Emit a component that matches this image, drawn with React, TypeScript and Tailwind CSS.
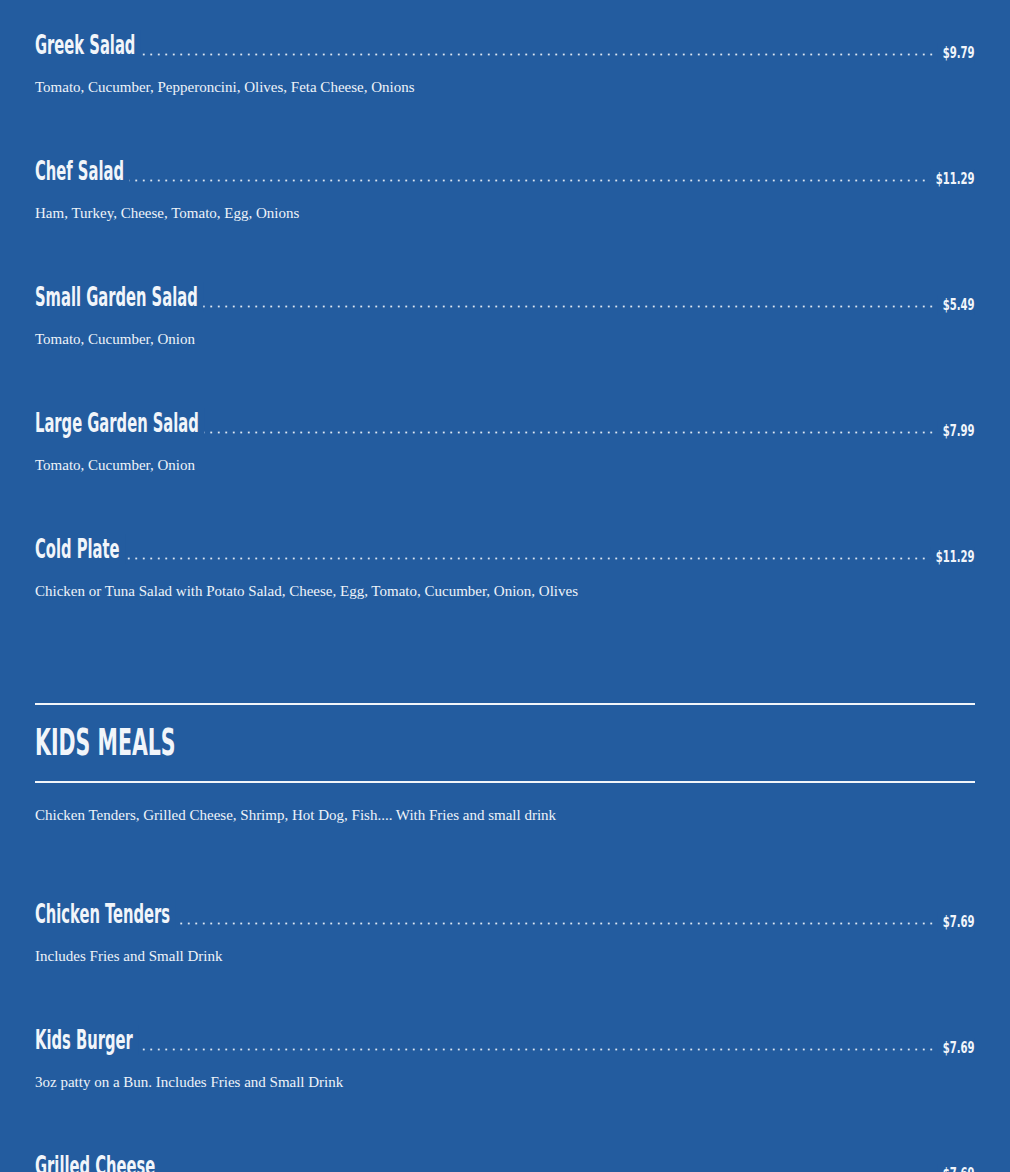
import React from "react";

type Item = { name: string; price: string; desc: string };

const salads: Item[] = [
  { name: "Greek Salad", price: "$9.79", desc: "Tomato, Cucumber, Pepperoncini, Olives, Feta Cheese, Onions" },
  { name: "Chef Salad", price: "$11.29", desc: "Ham, Turkey, Cheese, Tomato, Egg, Onions" },
  { name: "Small Garden Salad", price: "$5.49", desc: "Tomato, Cucumber, Onion" },
  { name: "Large Garden Salad", price: "$7.99", desc: "Tomato, Cucumber, Onion" },
  { name: "Cold Plate", price: "$11.29", desc: "Chicken or Tuna Salad with Potato Salad, Cheese, Egg, Tomato, Cucumber, Onion, Olives" },
];

const kids: Item[] = [
  { name: "Chicken Tenders", price: "$7.69", desc: "Includes Fries and Small Drink" },
  { name: "Kids Burger", price: "$7.69", desc: "3oz patty on a Bun. Includes Fries and Small Drink" },
  { name: "Grilled Cheese", price: "$7.69", desc: "Includes Fries and Small Drink" },
];

const cond = "font-['DejaVu_Sans_Condensed','DejaVu_Sans',sans-serif]";
const serif = "font-['Liberation_Serif','Times_New_Roman',serif]";

function MenuItem({ item, last }: { item: Item; last?: boolean }) {
  return (
    <div className={last ? "" : "mb-[57px]"}>
      <div className="flex h-[30px] items-end justify-between bg-[radial-gradient(circle,rgba(241,245,250,0.9)_0.8px,transparent_1.3px)] bg-[length:7.5px_3px] bg-[position:0_23px] bg-repeat-x">
        <span
          className={`${cond} inline-block origin-left scale-x-[0.63] bg-[#235c9f] pr-[9px] text-[26px] font-bold leading-[30px] text-[#f1f5fa] whitespace-nowrap`}
        >
          {item.name}
        </span>
        <span
          className={`${cond} mb-[-3px] inline-block origin-right scale-x-[0.7] bg-[#235c9f] pl-[8px] text-[16px] font-bold leading-[20px] text-[#f1f5fa] whitespace-nowrap`}
        >
          {item.price}
        </span>
      </div>
      <p className={`${serif} mt-[15px] text-[15px] leading-[24px] text-[#eef3f9]`}>{item.desc}</p>
    </div>
  );
}

export default function App() {
  return (
    <div className="min-h-[1172px] w-full overflow-hidden bg-[#235c9f] px-[35px] pt-[30px]">
      {salads.map((s, i) => (
        <MenuItem key={s.name} item={s} last={i === salads.length - 1} />
      ))}
      <div className="mt-[100px] border-t-2 border-[#f1f5fa]" />
      <div className="flex h-[76px] items-center pb-[3px]">
        <h2
          className={`${cond} inline-block origin-left scale-x-[0.6] text-[38px] font-bold leading-[44px] text-[#f1f5fa] whitespace-nowrap`}
        >
          KIDS MEALS
        </h2>
      </div>
      <div className="border-t-2 border-[#f1f5fa]" />
      <p className={`${serif} mt-[20px] text-[15px] leading-[24px] text-[#eef3f9]`}>
        Chicken Tenders, Grilled Cheese, Shrimp, Hot Dog, Fish.... With Fries and small drink
      </p>
      <div className="mt-[72px]">
        {kids.map((s) => (
          <MenuItem key={s.name} item={s} />
        ))}
      </div>
    </div>
  );
}
